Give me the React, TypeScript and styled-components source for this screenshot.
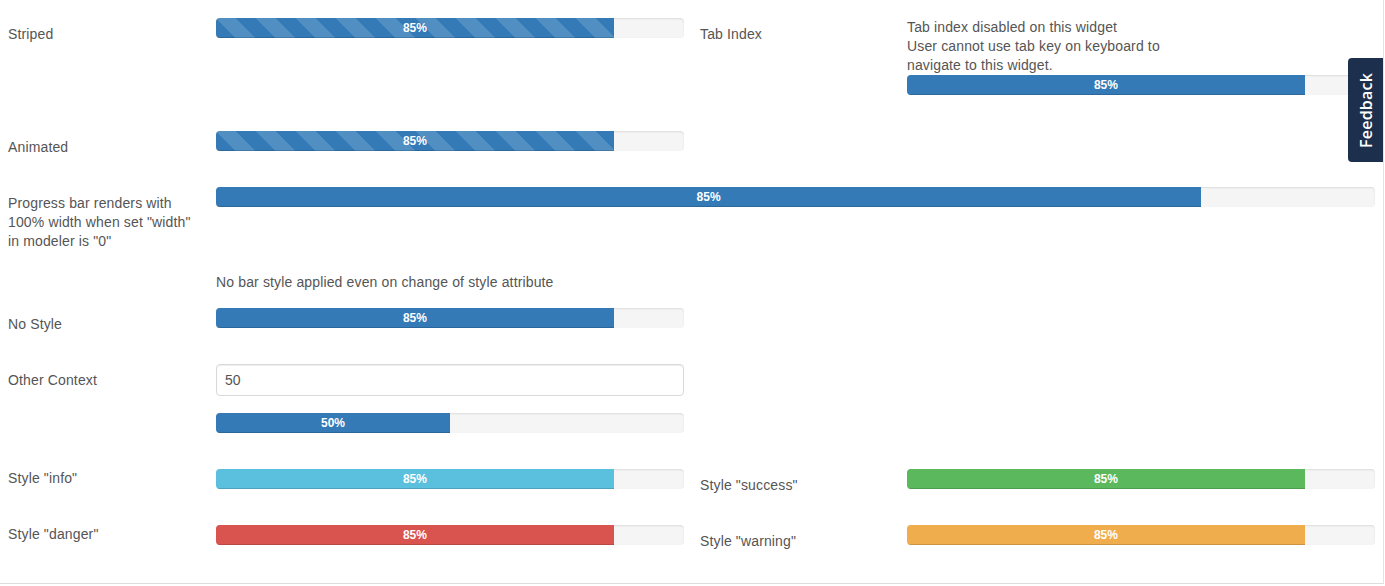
import React from "react";
import styled, { createGlobalStyle, css } from "styled-components";

const GlobalStyle = createGlobalStyle`
  html, body { margin: 0; padding: 0; background: #fff; }
  body {
    font-family: "Liberation Sans", Arial, Helvetica, sans-serif;
    font-size: 14px;
    line-height: 19px;
    letter-spacing: 0.14px;
    color: #555;
  }
  * { box-sizing: border-box; }
`;

const Page = styled.div`
  width: 1384px;
  height: 584px;
  padding: 18px 8px 0;
  border-right: 1px solid #e3e3e3;
  border-bottom: 1px solid #dddddd;
  display: flex;
  flex-direction: column;
`;

const Row = styled.div<{ $mt: number }>`
  margin-top: ${(p) => p.$mt}px;
  display: grid;
  grid-template-columns: 676px 675px;
  column-gap: 16px;
  align-items: start;
`;

const FullRow = styled.div<{ $mt: number }>`
  margin-top: ${(p) => p.$mt}px;
  display: grid;
  grid-template-columns: 208px 1159px;
  align-items: start;
`;

const Half = styled.div<{ $labelW: number }>`
  display: grid;
  grid-template-columns: ${(p) => p.$labelW}px 468px;
  align-items: start;
`;

const Label = styled.div<{ $pt?: number }>`
  padding-top: ${(p) => p.$pt ?? 7}px;
  padding-right: 15px;
  color: #555;
`;

const Control = styled.div`
  display: flex;
  flex-direction: column;
`;

const Note = styled.div`
  color: #555;
`;

const Line = styled.div``;

const Track = styled.div<{ $mt?: number }>`
  height: 20px;
  margin-top: ${(p) => p.$mt ?? 0}px;
  background: #f5f5f5;
  border-radius: 4px;
  box-shadow: inset 0 1px 2px rgba(0, 0, 0, 0.1);
  overflow: hidden;
  display: flex;
`;

type Variant = "primary" | "info" | "success" | "warning" | "danger";

const colors: Record<Variant, string> = {
  primary: "#337ab7",
  info: "#5bc0de",
  success: "#5cb85c",
  warning: "#f0ad4e",
  danger: "#d9534f",
};

const Fill = styled.div<{ $variant: Variant; $striped?: boolean }>`
  height: 20px;
  background-color: ${(p) => colors[p.$variant]};
  box-shadow: inset 0 -1px 0 rgba(0, 0, 0, 0.15);
  color: #fff;
  font-family: "Liberation Sans", Arial, sans-serif;
  font-size: 12px;
  font-weight: bold;
  line-height: 20px;
  letter-spacing: 0;
  text-align: center;
  white-space: nowrap;
  ${(p) =>
    p.$striped &&
    css`
      background-image: linear-gradient(
        45deg,
        rgba(255, 255, 255, 0.15) 25%,
        transparent 25%,
        transparent 50%,
        rgba(255, 255, 255, 0.15) 50%,
        rgba(255, 255, 255, 0.15) 75%,
        transparent 75%,
        transparent
      );
      background-size: 40px 40px;
    `}
`;

const Input = styled.input`
  height: 32px;
  width: 100%;
  padding: 0 8px;
  border: 1px solid #d9d9d9;
  border-radius: 4px;
  box-shadow: inset 0 1px 1px rgba(0, 0, 0, 0.075);
  font-family: "Liberation Sans", Arial, sans-serif;
  font-size: 14px;
  color: #555;
  outline: none;
`;

const FeedbackTab = styled.div`
  position: fixed;
  top: 58px;
  right: 2px;
  width: 35px;
  height: 104px;
  background: #1c2f4c;
  border-radius: 4px 0 0 4px;
  display: flex;
  align-items: center;
  justify-content: center;
`;

const FeedbackText = styled.span`
  writing-mode: vertical-rl;
  transform: rotate(180deg);
  color: #fff;
  font-family: "Open Sans", "Liberation Sans", sans-serif;
  font-weight: 600;
  font-size: 16px;
  line-height: 1;
  letter-spacing: 0.2px;
`;

const Progress = ({
  pct,
  variant = "primary",
  striped,
  mt,
}: {
  pct: number;
  variant?: Variant;
  striped?: boolean;
  mt?: number;
}) => (
  <Track $mt={mt}>
    <Fill $variant={variant} $striped={striped} style={{ width: `${pct}%` }}>
      {pct}%
    </Fill>
  </Track>
);

export default function App() {
  return (
    <>
      <GlobalStyle />
      <Page>
        <Row $mt={0}>
          <Half $labelW={208}>
            <Label>Striped</Label>
            <Control>
              <Progress pct={85} striped />
            </Control>
          </Half>
          <Half $labelW={207}>
            <Label>Tab Index</Label>
            <Control>
              <Note>
                <Line>Tab index disabled on this widget</Line>
                <Line>User cannot use tab key on keyboard to</Line>
                <Line>navigate to this widget.</Line>
              </Note>
              <Progress pct={85} />
            </Control>
          </Half>
        </Row>

        <Row $mt={36}>
          <Half $labelW={208}>
            <Label>Animated</Label>
            <Control>
              <Progress pct={85} striped />
            </Control>
          </Half>
        </Row>

        <FullRow $mt={30}>
          <Label>
            <Line>Progress bar renders with</Line>
            <Line>100% width when set "width"</Line>
            <Line>in modeler is "0"</Line>
          </Label>
          <Control>
            <Progress pct={85} />
          </Control>
        </FullRow>

        <Row $mt={22}>
          <Half $labelW={208}>
            <Label $pt={0} />
            <Note>No bar style applied even on change of style attribute</Note>
          </Half>
        </Row>

        <Row $mt={16}>
          <Half $labelW={208}>
            <Label>No Style</Label>
            <Control>
              <Progress pct={85} />
            </Control>
          </Half>
        </Row>

        <Row $mt={30}>
          <Half $labelW={208}>
            <Label>Other Context</Label>
            <Control>
              <Input defaultValue="50" />
              <Progress pct={50} mt={17} />
            </Control>
          </Half>
        </Row>

        <Row $mt={36}>
          <Half $labelW={208}>
            <Label $pt={0}>Style "info"</Label>
            <Control>
              <Progress pct={85} variant="info" />
            </Control>
          </Half>
          <Half $labelW={207}>
            <Label>Style "success"</Label>
            <Control>
              <Progress pct={85} variant="success" />
            </Control>
          </Half>
        </Row>

        <Row $mt={30}>
          <Half $labelW={208}>
            <Label $pt={0}>Style "danger"</Label>
            <Control>
              <Progress pct={85} variant="danger" />
            </Control>
          </Half>
          <Half $labelW={207}>
            <Label>Style "warning"</Label>
            <Control>
              <Progress pct={85} variant="warning" />
            </Control>
          </Half>
        </Row>
      </Page>
      <FeedbackTab>
        <FeedbackText>Feedback</FeedbackText>
      </FeedbackTab>
    </>
  );
}
